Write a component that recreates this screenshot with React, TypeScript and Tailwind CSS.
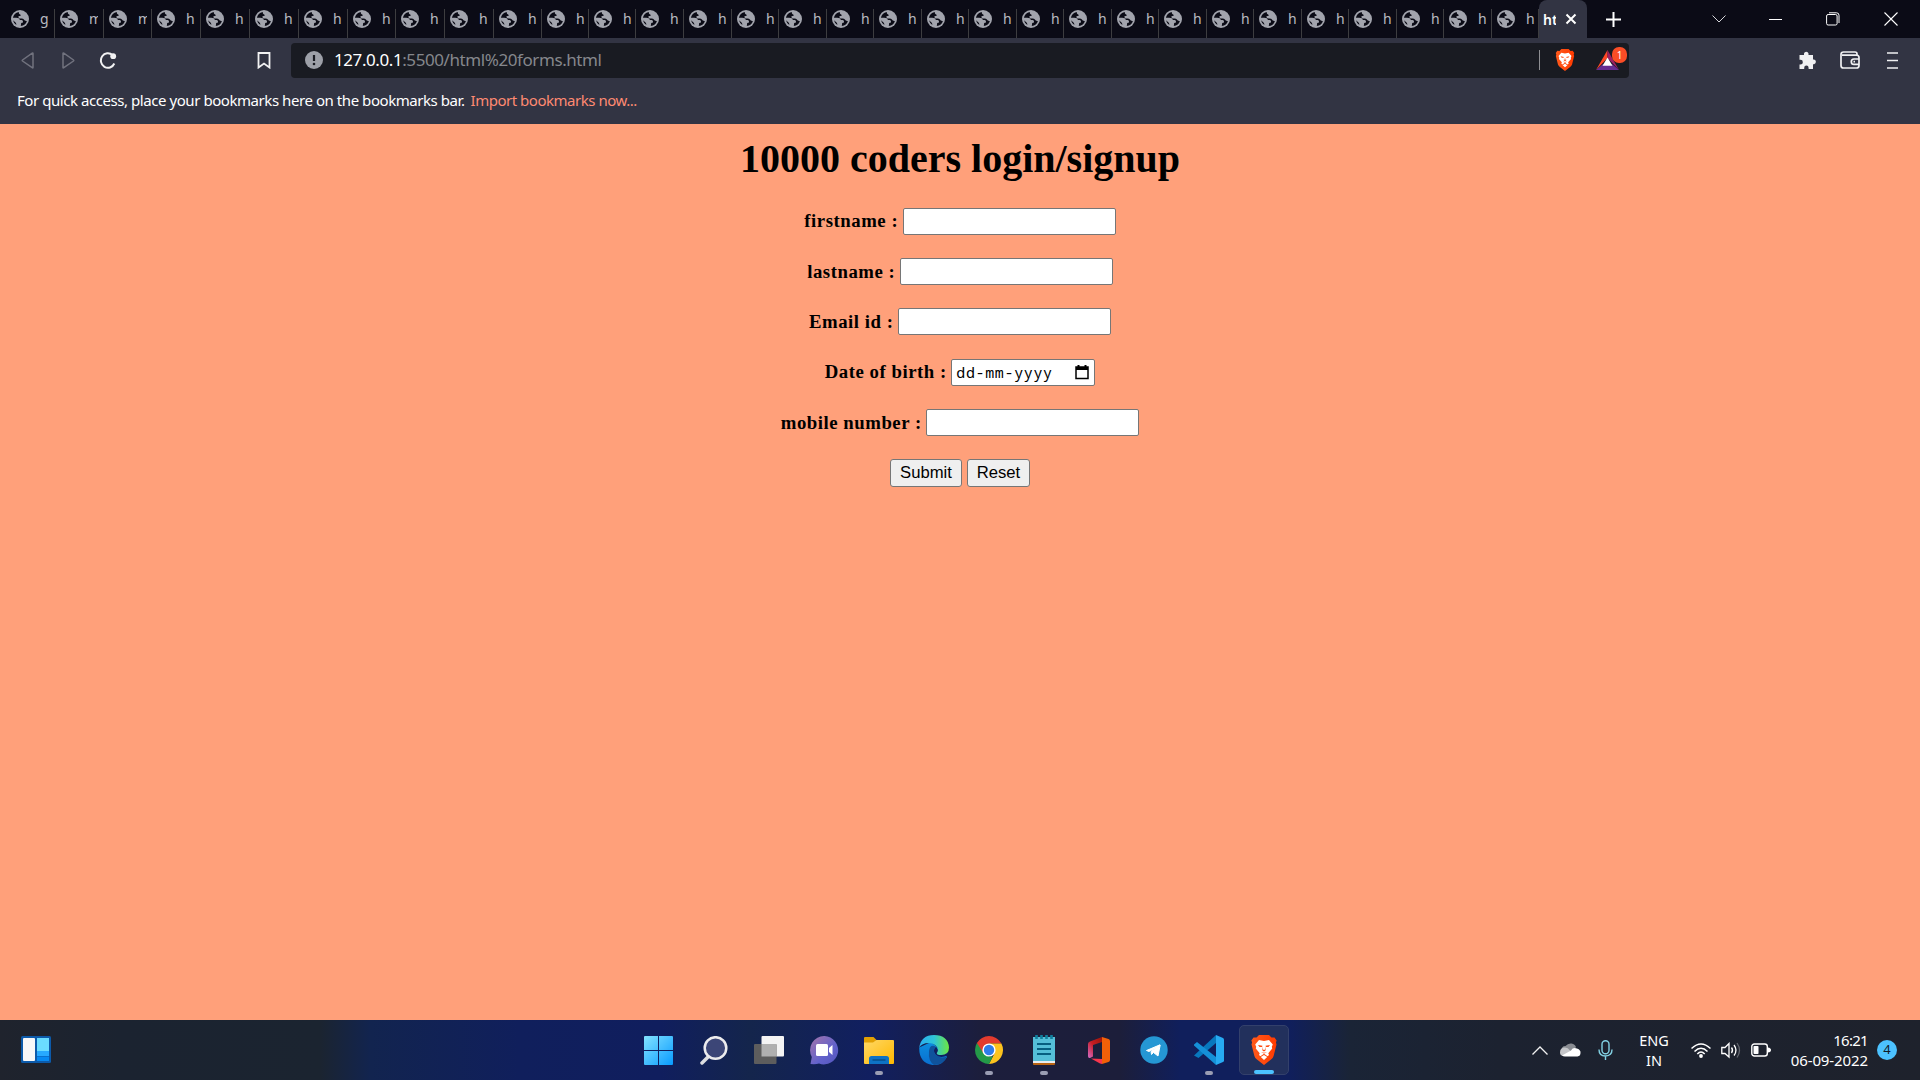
import React from "react";

const ends = [54,103,151,200,249,298,347,395,444,493,541,588,635,683,731,778,826,873,921,968,1016,1063,1111,1158,1206,1253,1301,1348,1396,1443,1491,1538];

const ui = "font-['Noto_Sans',sans-serif]";

function Globe() {
  return (
    <svg width="18" height="18" viewBox="0 0 18 18" className="shrink-0">
      <circle cx="9" cy="9" r="9" fill="#a2a4ad" />
      <path d="M7.800 1.900Q2.800 3 1.900 7.700L5.200 7.700Q8.600 7.700 8.800 9.900L10.800 10.100Q12.400 10.600 12 12.500L10.200 13.100L9.800 16.100Q14.600 15.600 15.900 11Q13.600 11.300 12.900 9.600Q12 8.300 9.800 8.600Q7.300 8.600 7.400 6.300L9.700 5.800Q9.900 4.600 8.700 4.300Q7.600 3.600 7.800 1.900Z" fill="#0b0b16" />
      <path d="M2 10.300L5 13L5.400 15Q2.600 13.400 2 10.300Z" fill="#0b0b16" />
    </svg>
  );
}

function Tab({ left, width, title }: { left: number; width: number; title: string }) {
  return (
    <div className="relative flex h-full shrink-0 items-center overflow-hidden" style={{ width, paddingLeft: left }}>
      <Globe />
      <span className={`${ui} ml-[11px] w-[9px] overflow-hidden whitespace-nowrap text-[14px] leading-5 text-[#b9bac0]`}>{title}</span>
      <span className="absolute right-0 bottom-0 h-[29px] w-px bg-[#3d3d40]" />
    </div>
  );
}

function BraveLion({ w, h }: { w: number; h: number }) {
  return (
    <svg width={w} height={h} viewBox="0 0 26 30">
      <defs>
        <linearGradient id="lion" x1="0" x2="1" y1="0" y2="0">
          <stop offset="0" stopColor="#ff5a1c" />
          <stop offset="1" stopColor="#ff3a00" />
        </linearGradient>
      </defs>
      <path d="M8 0H18L20.5 2.6L23.5 2.5L25.6 5.6L24.9 7.5L25.5 9.5L22.6 21Q22 23 20 24.5L13 30L6 24.5Q4 23 3.4 21L.5 9.5L1.1 7.5L.4 5.6L2.500 2.500L5.500 2.600Z" fill="url(#lion)" />
      <path d="M8 5L13 6L18 5L21.8 9.6L20.8 11.8L21.2 13.5L17.3 18.2L18 20L16.6 21.2L13 18.8L9.4 21.2L8 20L8.7 18.2L4.8 13.5L5.2 11.8L4.2 9.6Z" fill="#fff" />
      <path d="M9.8 22L13 20L16.2 22L13 25Z" fill="#fff" />
      <path d="M7 10L11.5 10.8L11 12L8.5 12ZM19 10L14.5 10.8L15 12L17.5 12ZM12 11.5L11.3 15.2L13 16.6L14.7 15.2L14 11.5L14 14.8L12 14.8ZM10 17.2L13 18.6L16 17.2L13 17.8Z" fill="#ff4a10" />
    </svg>
  );
}

function TabStrip() {
  return (
    <div className="flex h-[38px] items-stretch bg-[#0b0b16]">
      {ends.map((e, i) => {
        const prev = i === 0 ? 5 : ends[i - 1];
        return (
          <div key={e} className={i === 0 ? "flex pl-[6px]" : "flex"}>
            <Tab left={5} width={e - prev - (i === 0 ? 0 : 0)} title={i === 0 ? "g" : i < 3 ? "m" : "h"} />
          </div>
        );
      })}
      <div className="flex w-12 shrink-0 items-center rounded-t-lg bg-[#323443] pl-1">
        <span className={`${ui} w-[13px] overflow-hidden text-[14px] font-semibold text-white`}>ht</span>
        <svg width="12" height="12" viewBox="0 0 12 12" className="ml-[9px]">
          <path d="M1.500 1.500L10.500 10.500M10.500 1.500L1.500 10.500" stroke="#fff" strokeWidth="2" />
        </svg>
      </div>
      <div className="flex grow items-center pl-[19px]">
        <svg width="15" height="15" viewBox="0 0 15 15">
          <path d="M7.500 0V15M0 7.500H15" stroke="#fff" strokeWidth="2" />
        </svg>
        <svg width="14" height="8" viewBox="0 0 14 8" className="ml-[91px]">
          <path d="M.5 .5L7 7L13.500 .5" stroke="#d6d6da" fill="none" />
        </svg>
        <div className="ml-[43px] h-px w-[13px] bg-white" />
        <svg width="14" height="14" viewBox="0 0 14 14" className="ml-[44px]">
          <rect x=".6" y="2.500" width="10.500" height="10.500" rx="1.500" stroke="#fff" fill="none" />
          <path d="M3 .8H10.500Q13 .8 13 3.300V11" stroke="#fff" fill="none" />
        </svg>
        <svg width="14" height="14" viewBox="0 0 14 14" className="ml-[44px]">
          <path d="M.5 .5L13.500 13.500M13.500 .5L.5 13.500" stroke="#fff" strokeWidth="1.100" />
        </svg>
      </div>
    </div>
  );
}

function Toolbar() {
  return (
    <div className="flex h-[45px] items-center bg-[#323443] pb-[1px]">
      <svg width="13" height="17" viewBox="0 0 13 17" className="ml-[21px]">
        <path d="M12 1.500V15.500Q12 16.300 11.200 15.700L1.500 9Q.9 8.500 1.500 8L11.200 1.200Q12 .8 12 1.500Z" fill="none" stroke="#71727e" strokeWidth="1.500" />
      </svg>
      <svg width="13" height="17" viewBox="0 0 13 17" className="ml-[28px]">
        <path d="M1 1.500V15.500Q1 16.300 1.800 15.700L11.500 9Q12.100 8.500 11.500 8L1.800 1.200Q1 .8 1 1.500Z" fill="none" stroke="#71727e" strokeWidth="1.500" />
      </svg>
      <svg width="18" height="17" viewBox="0 0 18 17" className="ml-[24px]">
        <path d="M13.500 3A7 7.300 0 1 0 15.300 11.500" fill="none" stroke="#f2f2f3" strokeWidth="2" />
        <circle cx="14.200" cy="4.200" r="2.900" fill="#f2f2f3" />
      </svg>
      <svg width="14" height="17" viewBox="0 0 14 17" className="ml-[140px]">
        <path d="M1.500 1H12.500V15.500L7 11.500L1.500 15.500Z" fill="none" stroke="#f2f2f3" strokeWidth="1.800" />
      </svg>
      <div className="ml-5 flex h-[35px] w-[1338px] items-center rounded bg-[#191b22]">
        <svg width="18" height="18" viewBox="0 0 18 18" className="ml-[14px]">
          <circle cx="9" cy="9" r="9" fill="#9da0a8" />
          <path d="M9 4V10" stroke="#191b22" strokeWidth="2.200" />
          <circle cx="9" cy="13" r="1.300" fill="#191b22" />
        </svg>
        <span className={`${ui} ml-[11px] grow text-[17px] tracking-[-0.42px] whitespace-nowrap text-[#85878c]`}>
          <span className="text-white">127.0.0.1</span>:5500/html%20forms.html
        </span>
        <div className="h-5 w-px bg-[#8d8e92]" />
        <div className="ml-[15px]"><BraveLion w={20} h={22} /></div>
        <div className="relative ml-[21px] mr-[10px] h-5 w-[23px]">
          <svg width="23" height="20" viewBox="0 0 23 20">
            <path d="M11.500 0L0 20L11.500 8Z" fill="#ff4724" />
            <path d="M11.500 0L23 20L11.500 8Z" fill="#9e1f63" />
            <path d="M0 20H23L16 14H7Z" fill="#662d91" />
            <path d="M11.500 7.500L16.500 15.800H6.500Z" fill="#fff" />
          </svg>
          <span className={`${ui} absolute -top-[3px] left-[16px] flex h-4 w-[15px] items-center justify-center rounded-[7px] bg-[#fb4d26] text-[10px] text-white`}>1</span>
        </div>
      </div>
      <svg width="19" height="19" viewBox="0 0 19 19" className="ml-[169px]">
        <path d="M1.500 4H6V2.500A2.300 2.300 0 0 1 10.500 2.500V4H15V8.500H16A2.400 2.400 0 0 1 16 13.200H15V18H10.600V16.800A2.200 2.200 0 0 0 6.200 16.800V18H1.500V13.500H2.500A2.300 2.300 0 0 0 2.500 8.800H1.500Z" fill="#f0f0f2" />
      </svg>
      <svg width="20" height="18" viewBox="0 0 20 18" className="ml-[23px]">
        <path d="M17 4V3Q17 1 15 1H3.500Q1 1 1 3.500V14.500Q1 17 3.500 17H16.500Q19 17 19 14.500V6.500Q19 4.200 16.500 4.200H2M19 8H14A2.700 2.700 0 0 0 14 13.400H19M13.500 10.700H15" fill="none" stroke="#f0f0f2" strokeWidth="1.700" />
      </svg>
      <svg width="12" height="17" viewBox="0 0 12 17" className="ml-[27px]">
        <path d="M0 1H11M0 8.500H11M0 16H11" stroke="#f0f0f2" strokeWidth="1.700" />
      </svg>
    </div>
  );
}

function Field({ label, date = false }: { label: string; date?: boolean }) {
  return (
    <div className="flex h-[28px] items-center justify-center gap-[4.500px]">
      <label className="font-['Liberation_Serif',serif] text-[18.750px] leading-[22px] font-bold tracking-[0.53px] whitespace-nowrap text-black">{label}</label>
      {date ? (
        <div className="flex h-[27px] w-[144px] items-center justify-between rounded-[2px] border border-[#767676] bg-white pr-[5px] pl-[4px]">
          <span className="font-['Noto_Sans_Mono','DejaVu_Sans_Mono',monospace] text-[15px] tracking-[0.650px] text-black">dd-mm-yyyy</span>
          <svg width="14" height="15" viewBox="0 0 14 15">
            <path d="M1 2H13V13.500H1Z" fill="none" stroke="#000" strokeWidth="1.500" />
            <path d="M1 2H13V5H1ZM2.500 0H4.500V2H2.500ZM9.500 0H11.500V2H9.500Z" />
          </svg>
        </div>
      ) : (
        <div className="h-[27px] w-[213px] rounded-[2px] border border-[#767676] bg-white" />
      )}
    </div>
  );
}

const btn = "flex h-7 items-center justify-center rounded-[3px] border border-[#767676] bg-[#efefef] font-['Liberation_Sans',sans-serif] text-[16.67px] text-black";

function Page() {
  return (
    <main className="flex h-[896px] flex-col items-center bg-[#ffa07a]">
      <h1 className="mt-[11px] font-['Liberation_Serif',serif] text-[40px] leading-[48px] font-bold text-black">10000 coders login/signup</h1>
      <div className="mt-[24.400px] flex flex-col gap-[22.300px]">
        <Field label="firstname :" />
        <Field label="lastname :" />
        <Field label="Email id :" />
        <Field label="Date of birth :" date />
        <Field label="mobile number :" />
        <div className="flex justify-center gap-[5px]">
          <button className={`${btn} w-[72px]`}>Submit</button>
          <button className={`${btn} w-[63px]`}>Reset</button>
        </div>
      </div>
    </main>
  );
}

function TaskIcon({ children, dot, active }: { children: React.ReactNode; dot?: boolean; active?: boolean }) {
  return (
    <div className={active ? "relative flex h-[50px] w-[50px] items-center justify-center rounded-[5px] border border-[#33406b] bg-[#22305c]" : "relative flex h-[50px] w-[50px] items-center justify-center"}>
      {children}
      {dot && <span className="absolute bottom-0 left-[21px] h-1 w-2 rounded-full bg-[#9a9db3]" />}
      {active && <span className="absolute bottom-0 left-[14px] h-1 w-5 rounded-full bg-[#4cc2ff]" />}
    </div>
  );
}

function Taskbar() {
  return (
    <footer className={`${ui} flex h-[60px] items-center bg-[linear-gradient(90deg,#1f232d_0,#1b2330_120px,#1b2430_320px,#12244f_370px,#101f5c_520px,#101e5e_660px,#14254c_750px,#111f60_870px,#1c1e3c_980px,#1c1e3a_1120px,#101f5c_1180px,#101f5c_1290px,#1a2436_1350px,#1c2230_1500px,#1e222c_1920px)]`}>
      <svg width="31" height="28" viewBox="0 0 31 28" className="ml-[21px]">
        <rect width="30" height="27" rx="1.500" fill="#0c5aaa" />
        <rect x="2" y="2" width="12" height="23" rx="1" fill="#f7f7f8" />
        <path d="M16 2H28V15H16Z" fill="#6bdcff" />
        <path d="M16 15H28V20H16Z" fill="#27a9ff" />
        <path d="M16 20.500H28V25H16Z" fill="#0789f2" />
      </svg>
      <div className="ml-[582px] flex items-center gap-[5px]">
        <TaskIcon>
          <svg width="29" height="29" viewBox="0 0 29 29" className="-ml-px">
            <defs><linearGradient id="win" x1="0" y1="0" x2="1" y2="1"><stop stopColor="#83e2ff" /><stop offset="1" stopColor="#089bff" /></linearGradient></defs>
            <path d="M0 1Q0 0 1 0H14V14H0ZM15 0H28Q29 0 29 1V14H15ZM0 15H14V29H1Q0 29 0 28ZM15 15H29V28Q29 29 28 29H15Z" fill="url(#win)" />
          </svg>
        </TaskIcon>
        <TaskIcon>
          <svg width="28" height="29" viewBox="0 0 28 29">
            <path d="M2 27L8.500 20.500" stroke="#dcdde0" strokeWidth="3.500" strokeLinecap="round" />
            <circle cx="15.500" cy="12" r="10.800" fill="#3c4677" stroke="#ececee" strokeWidth="2.500" />
          </svg>
        </TaskIcon>
        <TaskIcon>
          <svg width="30" height="28" viewBox="0 0 30 28">
            <rect x="7.500" width="22.500" height="20.500" rx="1" fill="#f4f4f4" />
            <rect y="8" width="22.500" height="20" rx="1" fill="#5d5d5d" />
            <rect x="7.500" y="8" width="15" height="12.500" fill="#b0b0b0" />
          </svg>
        </TaskIcon>
        <TaskIcon>
          <svg width="29" height="29" viewBox="0 0 29 29">
            <defs><linearGradient id="chat" x1="0" y1="0" x2="1" y2="1"><stop stopColor="#a675a9" /><stop offset=".6" stopColor="#6262cb" /><stop offset="1" stopColor="#5355be" /></linearGradient></defs>
            <path d="M14.500 0A14.200 14.200 0 1 1 9 27.500Q6 28.500 .5 28L1.800 21A14.200 14.200 0 0 1 14.500 0Z" fill="url(#chat)" />
            <rect x="6" y="8" width="12" height="12" rx="1.500" fill="#fff" />
            <path d="M19 12L22.500 9V19L19 16Z" fill="#fff" />
          </svg>
        </TaskIcon>
        <TaskIcon dot>
          <svg width="30" height="27" viewBox="0 0 30 27">
            <defs><linearGradient id="folder" x1="0" y1="0" x2="1" y2="1"><stop stopColor="#ffd866" /><stop offset="1" stopColor="#ffb800" /></linearGradient></defs>
            <path d="M0 1Q0 0 1 0H9.500L12.500 3V10H0Z" fill="#e2a003" />
            <path d="M0 5.500H9L12.500 3H29Q30 3 30 4V26Q30 27 29 27H1Q0 27 0 26Z" fill="url(#folder)" />
            <path d="M5 27V21.500Q5 19 7.500 19H22.500Q25 19 25 21.500V27Z" fill="#0e72c4" />
            <path d="M8.500 23H21.500" stroke="#064983" strokeWidth="1.300" />
          </svg>
        </TaskIcon>
        <TaskIcon>
          <svg width="30" height="30" viewBox="0 0 30 30">
            <defs>
              <linearGradient id="edgeA"><stop stopColor="#2aaef0" /><stop offset=".5" stopColor="#2fc4d7" /><stop offset="1" stopColor="#6de83f" /></linearGradient>
              <linearGradient id="edgeB" x1="0" y1="0" x2="0" y2="1"><stop stopColor="#0c8edf" /><stop offset="1" stopColor="#0a6fd0" /></linearGradient>
            </defs>
            <path d="M.2 12.500Q0 28 13.500 30Q23 31 28 22L26 19L18 12L12 7Z" fill="url(#edgeB)" />
            <path d="M10 16Q11 9 16.500 11.500Q13 17 17.500 20.500Q22 24 28 21.500Q24 30 15 30Q9 26 10 16Z" fill="#0f529c" />
            <path d="M17 11.500Q13 16 17 20Q21.500 23.500 28.500 20.500L29.500 17L22 20Z" fill="#101f60" />
            <path d="M.3 12.500Q2 0 15 0Q29 0 30 12.500Q30 20 22 20Q17.500 20 17.800 18Q20 15 18 12Q15 8 9.500 8Q3 8 .3 12.500Z" fill="url(#edgeA)" />
          </svg>
        </TaskIcon>
        <TaskIcon dot>
          <svg width="28" height="28" viewBox="0 0 28 28">
            <path d="M14 14V28A14 14 0 0 1 1.900 7Z" fill="#249a48" />
            <path d="M14 7.500H26.400L26.100 7A14 14 0 0 0 1.900 7L8.400 17.200Z" fill="#e33b2e" />
            <path d="M19.600 17.200L14 28A14 14 0 0 0 26.400 7.500H14Z" fill="#fcc31e" />
            <path d="M8.400 17.200L14 20.600H17.800L14 28L8 25Z" fill="#249a48" />
            <circle cx="14" cy="14" r="6.600" fill="#fff" />
            <circle cx="14" cy="14" r="5.200" fill="#2f7de9" />
          </svg>
        </TaskIcon>
        <TaskIcon dot>
          <svg width="22" height="30" viewBox="0 0 22 30">
            <path d="M0 26H22V29Q22 30 21 30H1Q0 30 0 29Z" fill="#b86312" />
            <path d="M0 2H22V28H0Z" fill="#e8edf0" />
            <path d="M0 2H22V26H0Z" fill="#55bfd8" />
            <path d="M4 9H18M4 14H18M4 19H18" stroke="#075f80" strokeWidth="1.800" />
            <path d="M3.500 0V4M8.500 0V4M13.500 0V4M18.500 0V4" stroke="#10809e" strokeWidth="2.600" />
          </svg>
        </TaskIcon>
        <TaskIcon>
          <svg width="22" height="27" viewBox="0 0 22 27">
            <defs><linearGradient id="office" x1="1" y1="0" x2="0" y2="1"><stop stopColor="#9b1508" /><stop offset=".5" stopColor="#c81d24" /><stop offset="1" stopColor="#d56dcb" /></linearGradient></defs>
            <path d="M14 0L2 4.500Q0 5.200 0 7V19Q0 21.500 2 21L5 19.500V8L14 5Z" fill="url(#office)" />
            <path d="M14 0L20.500 2Q22 2.500 22 4V23Q22 24.500 20.500 25L14 27Z" fill="#f26008" />
            <path d="M3 21.500L14 22V27L12 26.500Z" fill="#f8364d" />
          </svg>
        </TaskIcon>
        <TaskIcon>
          <svg width="28" height="28" viewBox="0 0 28 28">
            <circle cx="14" cy="14" r="13.700" fill="#2597d4" />
            <path d="M6.500 14.500L20 8.800Q20.500 8.800 20 10L18 20L13.500 16.500L11.500 18.500L11 15.500L18 10.500L9 15.500Z" fill="#fff" stroke="#fff" />
          </svg>
        </TaskIcon>
        <TaskIcon dot>
          <svg width="30" height="30" viewBox="0 0 30 30">
            <path d="M0 20.500L22 0V8L4.500 23Z" fill="#0878be" />
            <path d="M0 9.500L3 7L22 22V30L0 10.500Z" fill="#1590d8" />
            <path d="M22 0L29 3Q30 3.500 30 4.500V25.500Q30 26.500 29 27L22 30Z" fill="#27aaf2" />
          </svg>
        </TaskIcon>
        <TaskIcon active><BraveLion w={26} h={30} /></TaskIcon>
      </div>
      <div className="flex grow items-center text-white">
        <svg width="16" height="9" viewBox="0 0 16 9" className="ml-[243px]"><path d="M.5 8.500L8 1L15.500 8.500" fill="none" stroke="#f1f1f1" strokeWidth="1.300" /></svg>
        <svg width="21" height="14" viewBox="0 0 21 14" className="ml-[12px]">
          <path d="M2 8Q1 3 5.500 3Q8 0 11.500 .5Q15 1 16 4L12 10H3Z" fill="#898c92" />
          <path d="M0 9.500Q0 4.500 5 4.500Q8 4.500 10 7.500L15 12L3 13Q0 12.500 0 9.500Z" fill="#c5c6c9" />
          <path d="M2 12.500L11 7.500Q13 4 17 5.500Q21 7 20.500 10Q20.500 13 17.500 13.500H5Q3 13.500 2 12.500Z" fill="#fff" />
        </svg>
        <svg width="15" height="20" viewBox="0 0 15 20" className="ml-[17px]">
          <rect x="4" y=".8" width="7" height="13" rx="3.500" fill="none" stroke="#82d1e3" strokeWidth="1.400" />
          <path d="M1 9.500Q1 16 7.500 16Q14 16 14 9.500M7.500 16V20" fill="none" stroke="#82d1e3" strokeWidth="1.400" />
        </svg>
        <div className="ml-[25px] w-[32px] text-center text-[14.500px] leading-5"><div>ENG</div><div>IN</div></div>
        <svg width="20" height="15" viewBox="0 0 20 15" className="ml-[21px]">
          <path d="M.5 5.500Q10 -3.500 19.500 5.500M3.500 8.500Q10 2 16.500 8.500M6.300 11Q10 7 13.700 11" fill="none" stroke="#fff" strokeWidth="1.500" />
          <circle cx="10" cy="13" r="1.900" fill="#fff" />
        </svg>
        <svg width="20" height="17" viewBox="0 0 20 17" className="ml-[10px]">
          <path d="M.8 5.500H4L8 1.500V15L4 11.500H.8Z" fill="none" stroke="#fff" strokeWidth="1.300" />
          <path d="M10.500 5.500Q12.500 8.300 10.500 11M13 3Q17 8.300 13 13.500" fill="none" stroke="#fff" strokeWidth="1.300" />
          <path d="M16 1Q21 8.300 16 15.500" fill="none" stroke="#62666f" strokeWidth="1.300" />
        </svg>
        <svg width="20" height="14" viewBox="0 0 20 14" className="ml-[10px]">
          <rect x=".8" y="1" width="15.500" height="12" rx="2.500" fill="none" stroke="#fff" strokeWidth="1.400" />
          <rect x="2.500" y="3" width="5" height="8" rx=".8" fill="#fff" />
          <path d="M17 4.500Q20 5 20 7Q20 9 17 9.500Z" fill="#fff" />
        </svg>
        <div className="ml-[15px] flex w-[82px] flex-col items-end text-[15px] leading-5 whitespace-nowrap"><span className="tracking-[-0.700px]">16:21</span><span className="tracking-[-0.100px]">06-09-2022</span></div>
        <div className="ml-[9px] flex h-5 w-5 items-center justify-center rounded-full bg-[#4cc2ff] text-[13px] text-[#111c28]">4</div>
      </div>
    </footer>
  );
}

export default function App() {
  return (
    <div className="flex h-[1080px] w-[1920px] flex-col overflow-hidden">
      <TabStrip />
      <Toolbar />
      <div className={`${ui} flex h-[41px] items-center gap-[6px] bg-[#323443] pb-[6px] pl-[17px] text-[15px] text-white`}>
        <span className="tracking-[-0.440px]">For quick access, place your bookmarks here on the bookmarks bar.</span>
        <span className="tracking-[-0.480px] text-[#ff8a72]">Import bookmarks now...</span>
      </div>
      <Page />
      <Taskbar />
    </div>
  );
}
